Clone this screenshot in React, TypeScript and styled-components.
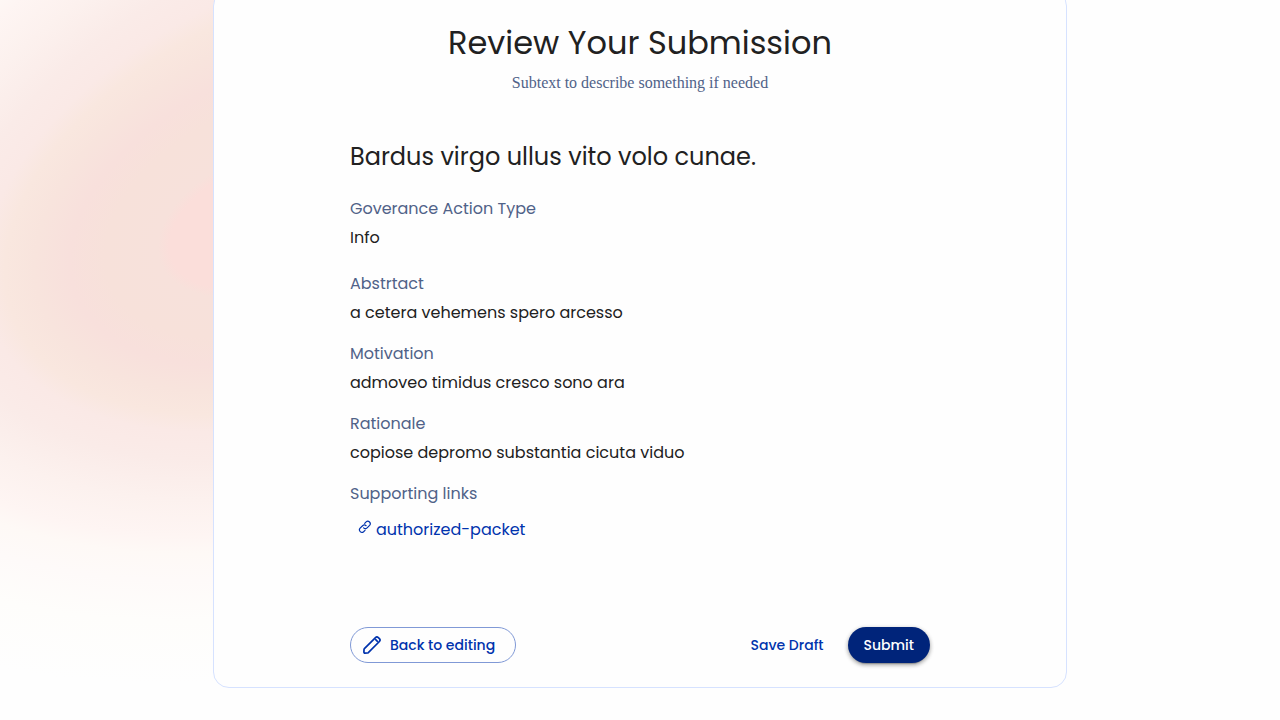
import React from "react";
import styled, { createGlobalStyle } from "styled-components";

const GlobalStyle = createGlobalStyle`
  *, *::before, *::after { box-sizing: border-box; }
  body {
    margin: 0;
    background: #fefefe;
    color: #212121;
    font-family: Poppins, Inter, "Open Sans", sans-serif;
    font-size: 16px;
    line-height: 24px;
    text-rendering: optimizeSpeed;
  }
`;

const Page = styled.div`
  position: relative;
  min-height: 100vh;
  overflow: hidden;
  padding-bottom: 32px;
`;

const Glow = styled.svg`
  position: absolute;
  top: 0;
  left: 0;
`;

const Card = styled.main`
  position: relative;
  width: 66.667%;
  min-width: 640px;
  margin: -10px auto 0;
  padding: 32px 24px 24px;
  background: #fefefe;
  border: 1px solid #d6e2ff;
  border-radius: 16px;
`;

const Content = styled.div`
  max-width: 580px;
  margin: 0 auto;
`;

const Header = styled.header`
  text-align: center;
  margin-bottom: 44px;
`;

const Title = styled.h1`
  margin: 0 0 8px;
  font-size: 32px;
  font-weight: 400;
  line-height: 40px;
`;

const Subtitle = styled.p`
  margin: 0;
  color: #506288;
  font-family: "Liberation Serif", serif;
`;

const ActionTitle = styled.h2`
  margin: 0 0 22px;
  font-size: 24px;
  font-weight: 400;
  line-height: 36px;
`;

const Details = styled.dl`
  margin: 0;
`;

const Field = styled.div<{ $last?: boolean; $wide?: boolean }>`
  margin-bottom: ${(p) => (p.$last ? 0 : p.$wide ? 22 : 17)}px;
`;

const Label = styled.dt`
  margin-bottom: 5px;
  color: #506288;
`;

const Value = styled.dd`
  margin: 0;
`;

const LinkValue = styled(Value)`
  padding: 6px 8px 0;
`;

const SupportLink = styled.a`
  display: inline-flex;
  gap: 4px;
  color: #0033ad;
  text-decoration: none;

  svg { margin-top: 2px; }
`;

const Actions = styled.div`
  display: flex;
  align-items: center;
  gap: 8px;
  margin-top: 85px;
`;

const Button = styled.button`
  display: inline-flex;
  align-items: center;
  justify-content: center;
  height: 36px;
  padding: 0 16px;
  border: 0;
  border-radius: 18px;
  background: transparent;
  color: #0033ad;
  font: inherit;
  font-size: 14px;
  font-weight: 500;
  text-rendering: inherit;
  cursor: pointer;
`;

const OutlinedButton = styled(Button)`
  gap: 8px;
  margin-right: auto;
  padding: 0 20px 0 11px;
  border: 1px solid #8099d6;
`;

const SolidButton = styled(Button)`
  background: #00247a;
  color: #ffffff;
  box-shadow: 0 3px 1px -2px rgba(0, 0, 0, 0.2), 0 2px 4px rgba(0, 0, 0, 0.3),
    0 1px 5px rgba(0, 0, 0, 0.12);
`;

const LinkIcon = () => (
  <svg width="14" height="14" viewBox="0 0 14 14" fill="none" stroke="currentColor" strokeWidth="1.2" strokeLinecap="round" aria-hidden="true">
    <path d="M5.600 7.900a2.500 2.500 0 0 0 3.500 0l2.500-2.500a2.480 2.480 0 0 0-3.500-3.500L6.700 3.300" />
    <path d="M8.100 5.700a2.500 2.500 0 0 0-3.500 0L2.100 8.200a2.480 2.480 0 0 0 3.500 3.500L7 10.300" />
  </svg>
);

const PencilIcon = () => (
  <svg width="20" height="20" viewBox="0 0 20 20" fill="none" stroke="currentColor" strokeWidth="1.7" strokeLinejoin="round" aria-hidden="true">
    <path d="M2.900 18.100a1 1 0 0 1-1-1l.1-2.500a1.500 1.500 0 0 1 .4-.9L13.500 2.600a2 2 0 0 1 2.800 0l1.100 1.100a2 2 0 0 1 0 2.800L6.300 17.600a1.500 1.500 0 0 1-.9.4z" />
    <path d="M13.200 4.100l2.700 2.700" />
  </svg>
);

const fields = [
  { label: "Goverance Action Type", value: "Info", wide: true },
  { label: "Abstrtact", value: "a cetera vehemens spero arcesso" },
  { label: "Motivation", value: "admoveo timidus cresco sono ara" },
  { label: "Rationale", value: "copiose depromo substantia cicuta viduo" },
];

const glowStops: [number, string][] = [
  [0.12, "#fbdeda"],
  [0.14, "#f7e1db"],
  [0.23, "#f7e1da"],
  [0.29, "#f8e0dc"],
  [0.35, "#f8e4dd"],
  [0.4, "#f9e7df"],
  [0.44, "#fae9e6"],
  [0.5, "#faebe8"],
  [0.59, "#fcf1ee"],
  [0.67, "#fef5f3"],
  [0.71, "#fef9f6"],
  [0.77, "#fefaf9"],
  [0.86, "#fefdfb"],
  [1, "#fefefe"],
];

export default function App() {
  return (
    <>
      <GlobalStyle />
      <Page>
        <Glow width="1060" height="720" aria-hidden="true">
          <defs>
            <radialGradient
              id="glow"
              gradientUnits="userSpaceOnUse"
              cx="0"
              cy="0"
              r="1"
              fx="-0.277"
              fy="0.038"
              gradientTransform="translate(447 132) rotate(-21.8) scale(832 492)"
            >
              {glowStops.map(([offset, color]) => (
                <stop key={offset} offset={offset} stopColor={color} />
              ))}
            </radialGradient>
          </defs>
          <rect width="1060" height="720" fill="url(#glow)" />
        </Glow>
        <Card>
          <Content>
            <Header>
              <Title>Review Your Submission</Title>
              <Subtitle>Subtext to describe something if needed</Subtitle>
            </Header>
            <ActionTitle>Bardus virgo ullus vito volo cunae.</ActionTitle>
            <Details>
              {fields.map((f) => (
                <Field key={f.label} $wide={f.wide}>
                  <Label>{f.label}</Label>
                  <Value>{f.value}</Value>
                </Field>
              ))}
              <Field $last>
                <Label>Supporting links</Label>
                <LinkValue>
                  <SupportLink href="#authorized-packet">
                    <LinkIcon />
                    authorized-packet
                  </SupportLink>
                </LinkValue>
              </Field>
            </Details>
            <Actions>
              <OutlinedButton type="button">
                <PencilIcon />
                Back to editing
              </OutlinedButton>
              <Button type="button">Save Draft</Button>
              <SolidButton type="button">Submit</SolidButton>
            </Actions>
          </Content>
        </Card>
      </Page>
    </>
  );
}
